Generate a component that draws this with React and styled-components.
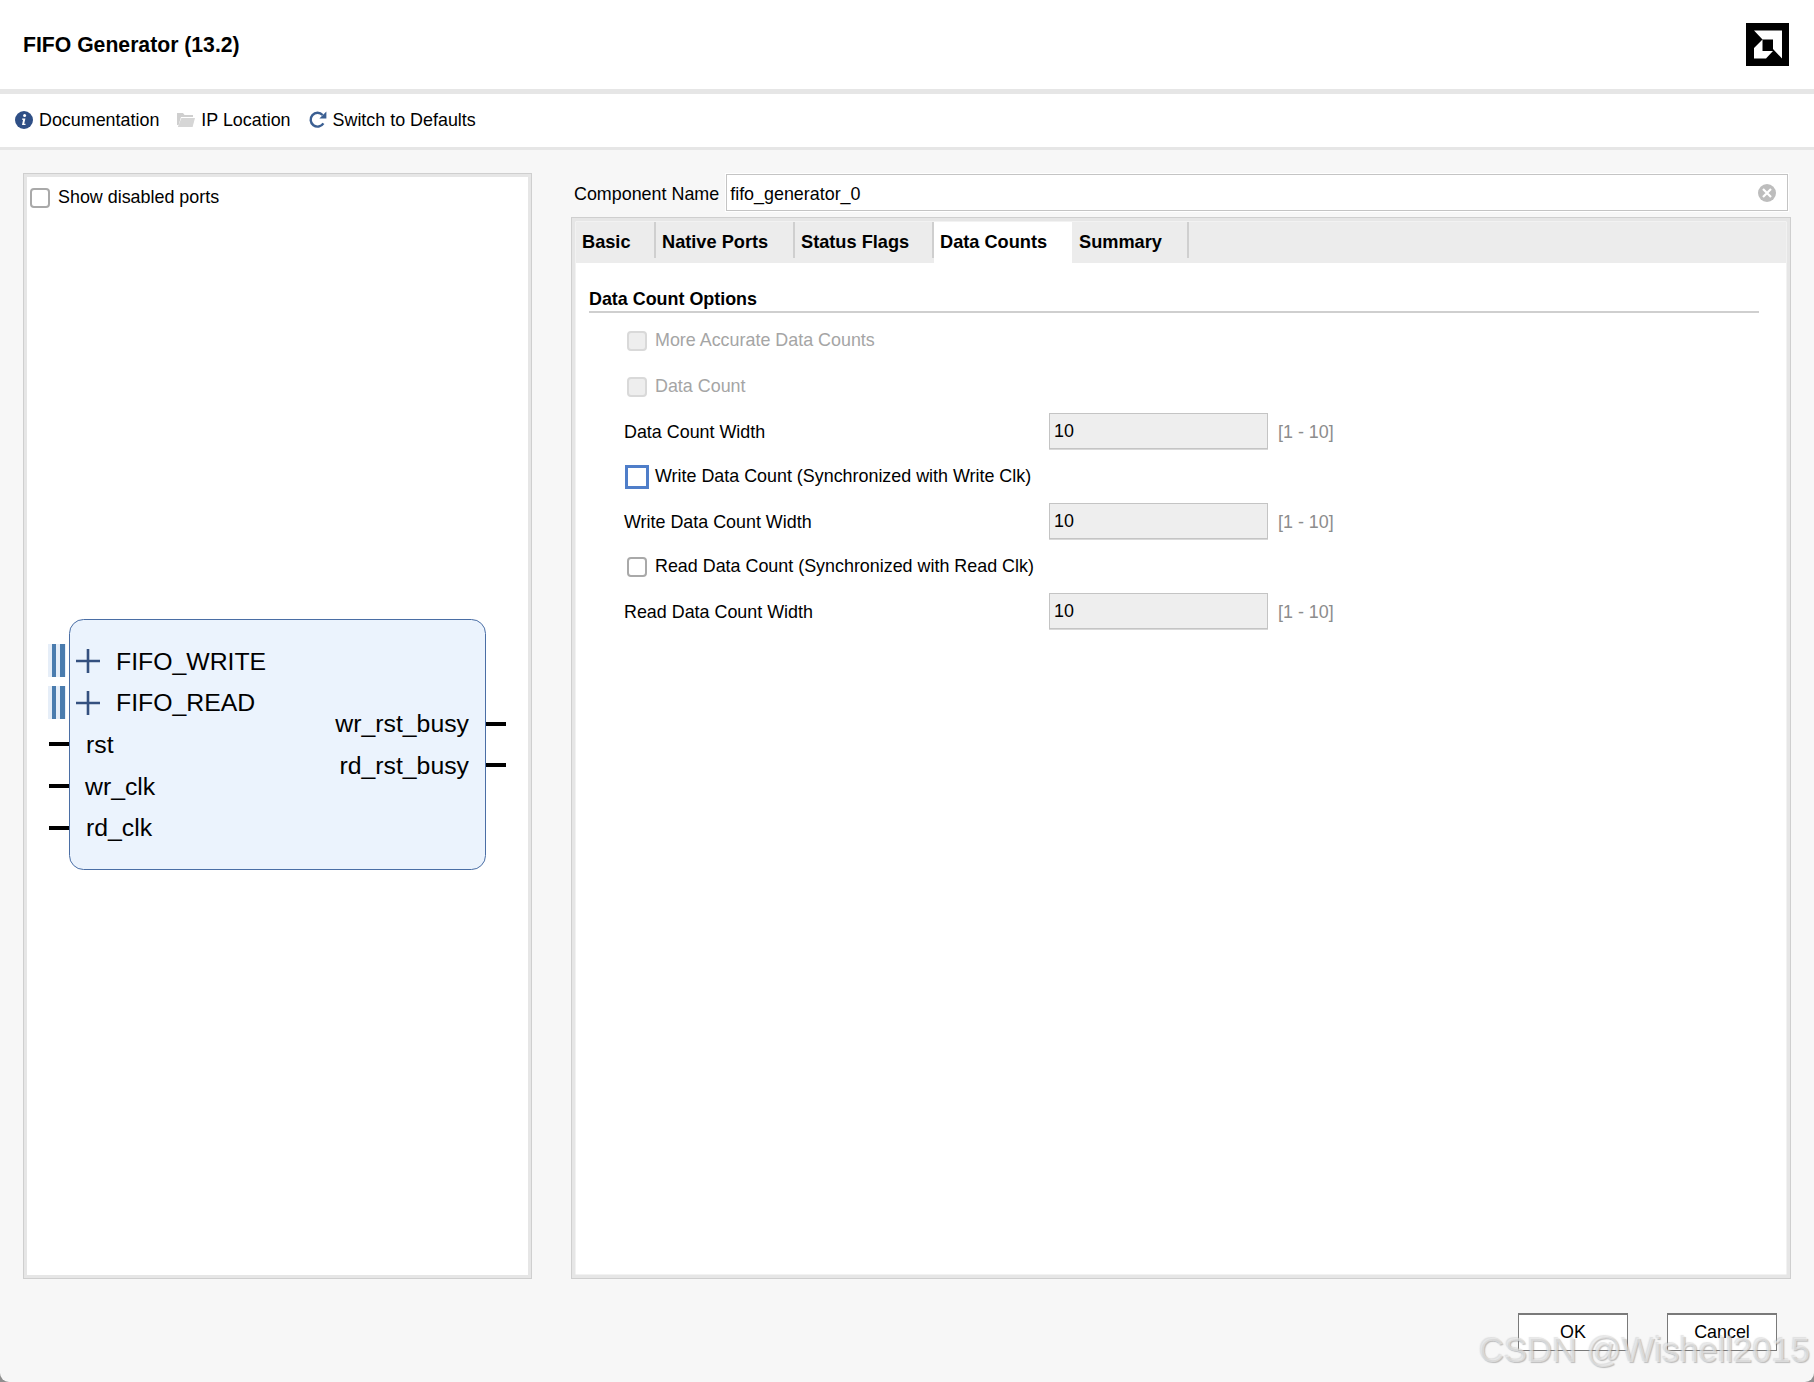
import React from 'react';
import styled, { createGlobalStyle } from 'styled-components';

const Global = createGlobalStyle`
  html, body { margin: 0; padding: 0; background: #8f8f8f; }
  body { font-family: "Liberation Sans", Arial, sans-serif; color: #000; }
  * { box-sizing: border-box; }
`;

const Page = styled.div`
  position: relative;
  width: 1814px;
  height: 1382px;
  display: flex;
  flex-direction: column;
  background: #f7f7f7;
  border-radius: 0 0 9px 9px;
  overflow: hidden;
`;

const Header = styled.header`
  height: 94px;
  flex: none;
  display: flex;
  align-items: center;
  justify-content: space-between;
  padding: 0 25px 0 23px;
  background: #fff;
  border-bottom: 5px solid #e6e6e6;
`;

const Title = styled.h1`
  margin: 0;
  font-size: 21.2px;
  font-weight: 700;
`;

const Toolbar = styled.nav`
  height: 56px;
  flex: none;
  display: flex;
  align-items: center;
  padding: 0 0 1px 15px;
  gap: 18px;
  background: #fff;
  border-bottom: 3px solid #e6e6e6;
`;

const ToolItem = styled.span`
  display: flex;
  align-items: center;
  gap: 6px;
  font-size: 17.9px;
`;

const Main = styled.main`
  flex: 1;
  display: flex;
  padding: 23px 23px 0;
  gap: 39px;
  height: 1130px;
`;

const SymbolPanel = styled.section`
  width: 509px;
  height: 1106px;
  flex: none;
  border: 1px solid #cfcfcf;
  background: #fff;
  box-shadow: inset 0 0 0 3px #e6e6e6;
  padding: 13px 0 0 6px;
`;

const Check = styled.span`
  display: block;
  flex: none;
  width: 20px;
  height: 20px;
  border-radius: 4px;
  border: 2px solid ${p => (p.$disabled ? '#d9d9d9' : '#a9a9a9')};
  background: ${p => (p.$disabled ? '#eeeeee' : '#fff')};
`;

const FocusCheck = styled.span`
  display: block;
  flex: none;
  width: 24px;
  height: 24px;
  margin-left: -2px;
  margin-right: -2px;
  border: 3px solid #4f7ec9;
  background: #fff;
`;

const CheckLabel = styled.label`
  display: flex;
  align-items: center;
  gap: 8px;
  font-size: 17.9px;
  color: ${p => (p.$disabled ? '#a5a5a5' : '#000')};
`;

const Diagram = styled.svg`
  display: block;
  margin: 410px 0 0 18px;
`;

const ConfigColumn = styled.section`
  flex: 1;
  display: flex;
  flex-direction: column;
  gap: 5px;
  min-width: 0;
`;

const NameRow = styled.div`
  height: 39px;
  display: flex;
  align-items: center;
  gap: 7px;
  padding: 0 3px 0 3px;
  font-size: 17.9px;
  white-space: nowrap;
`;

const NameText = styled.span`
  padding-top: 4px;
`;

const NameField = styled.div`
  flex: 1;
  height: 37px;
  display: flex;
  align-items: center;
  justify-content: space-between;
  padding: 0 11px 0 3px;
  background: #fff;
  border: 1px solid #c4c4c4;
  box-shadow: 0 0 0 1px #fff;
`;

const TabFrame = styled.div`
  width: 1220px;
  height: 1062px;
  display: flex;
  flex-direction: column;
  border: 1px solid #cfcfcf;
  background: #fff;
  box-shadow: inset 0 0 0 3.5px #e6e6e6;
  padding: 4px;
`;

const TabStrip = styled.div`
  height: 41px;
  flex: none;
  display: flex;
  background: #ececec;
`;

const Tab = styled.div`
  width: ${p => p.$w}px;
  height: 41px;
  padding: 10px 0 0 ${p => p.$left}px;
  display: flex;
  align-items: flex-start;
  font-size: 18.2px;
  font-weight: 700;
  background: ${p => (p.$active ? '#fff' : 'transparent')};
  border-right: ${p => (p.$active ? 'none' : '2px solid transparent')};
  position: relative;

  &::after {
    content: '';
    display: ${p => (p.$active ? 'none' : 'block')};
    position: absolute;
    right: -2px;
    top: 0;
    height: 36px;
    width: 2px;
    background: #cfcfcf;
  }
`;

const TabBody = styled.div`
  flex: 1;
  padding: 27px 27px 0 13px;
`;

const Section = styled.h2`
  margin: 0;
  height: 23px;
  font-size: 17.9px;
  font-weight: 700;
  line-height: 18px;
  border-bottom: 2px solid #cfcfcf;
`;

const Rows = styled.div`
  display: flex;
  flex-direction: column;
  padding: 3px 0 0 35px;
`;

const Row = styled.div`
  height: ${p => p.$h || 45}px;
  display: flex;
  align-items: center;
  padding-left: ${p => (p.$indent ? 3 : 0)}px;
  padding-top: ${p => (p.$indent ? 2 : 0)}px;
  font-size: 17.9px;
`;

const RowLabel = styled.span`
  width: 425px;
  flex: none;
  padding-top: 4px;
`;

const ValueBox = styled.span`
  width: 219px;
  height: 36px;
  flex: none;
  display: flex;
  align-items: center;
  padding: 2px 0 0 4px;
  background: #eeeeee;
  border: 1px solid #c4c4c4;
  box-shadow: 0 1px 0 #d8d8d8;
`;

const Range = styled.span`
  margin-left: 10px;
  padding-top: 4px;
  color: #8c8c8c;
`;

const Footer = styled.footer`
  display: flex;
  justify-content: flex-end;
  gap: 39px;
  padding: 0 37px 31px 0;
  flex: none;
`;

const Button = styled.button`
  width: 110px;
  height: 38px;
  padding: 0 0 1px;
  background: #fff;
  border: 1px solid #7a7a7a;
  border-top-width: 2px;
  font-family: inherit;
  font-size: 17.9px;
  color: #000;
`;

const Watermark = styled.div`
  position: absolute;
  right: 4px;
  bottom: 15px;
  font-size: 34.6px;
  line-height: 34px;
  color: rgba(240, 240, 240, 0.6);
  text-shadow: 1px 1px 1px rgba(130, 130, 130, 0.5), -1px -1px 1px rgba(170, 170, 170, 0.3);
  pointer-events: none;
`;

const InfoIcon = () => (
  <svg width="18" height="18" viewBox="0 0 18 18">
    <circle cx="9" cy="9" r="9" fill="#2f4f86" />
    <circle cx="9.6" cy="4.6" r="1.5" fill="#fff" />
    <path d="M7.2 7.6h3.2l-1.2 5.2h1.3v1.1H7l1.1-5.2H7z" fill="#fff" />
  </svg>
);

const FolderIcon = () => (
  <svg width="18" height="18" viewBox="0 0 18 18">
    <path d="M0 2h6l1.5 2H16v2H4L1.6 14H0z" fill="#cfcfcf" />
    <path d="M4.4 7H18l-2.4 9H0.8z" fill="#d6d6d6" />
  </svg>
);

const RefreshIcon = () => (
  <svg width="18" height="18" viewBox="0 0 18 18" fill="none">
    <path d="M14.4 12.4A6.9 6.9 0 1 1 13.6 4" stroke="#3b5f92" strokeWidth="2.4" />
    <path d="M17.4 0.6v7h-7z" fill="#3b5f92" />
  </svg>
);

const ClearIcon = () => (
  <svg width="18" height="18" viewBox="0 0 18 18">
    <circle cx="9" cy="9" r="9" fill="#bdbdbd" />
    <path d="M5 5l8 8M13 5l-8 8" stroke="#fff" strokeWidth="2.2" />
  </svg>
);

const AmdLogo = () => (
  <svg width="43" height="43" viewBox="0 0 43 43">
    <rect width="43" height="43" fill="#000" />
    <path d="M8 7.500h28v28l-9-9.500v-9.500h-10.500z" fill="#fff" />
    <path d="M8 35.500v-10.500l8.500-8.500V28H27l-7 7.500z" fill="#fff" />
  </svg>
);

const BusPin = ({ y }) => (
  <g>
    <rect x="0" y={y - 17} width="18" height="33" fill="#e6eef8" />
    <rect x="4" y={y - 17} width="4" height="33" fill="#4a7cae" />
    <rect x="12" y={y - 17} width="5" height="33" fill="#4a7cae" />
    <path d={`M28 ${y}h24M40 ${y - 12}v24`} stroke="#34507f" strokeWidth="2.600" fill="none" />
  </g>
);

const DiagramText = styled.text`
  font-family: "Liberation Sans", Arial, sans-serif;
  font-size: 24.8px;
  fill: #000;
`;

const FifoSymbol = () => (
  <Diagram width="460" height="256" viewBox="0 0 460 256">
    <rect x="21.500" y="1.500" width="416" height="250" rx="14" fill="#ebf3fd" stroke="#4a6ea5" strokeWidth="1" />
    <BusPin y={43} />
    <BusPin y={85} />
    <DiagramText x="68" y="52">FIFO_WRITE</DiagramText>
    <DiagramText x="68" y="93">FIFO_READ</DiagramText>
    {[126, 168, 210].map(y => <rect key={y} x="1" y={y - 2} width="20" height="4" fill="#000" />)}
    <DiagramText x="38" y="135">rst</DiagramText>
    <DiagramText x="37" y="177">wr_clk</DiagramText>
    <DiagramText x="38" y="218">rd_clk</DiagramText>
    <DiagramText x="421" y="114" textAnchor="end">wr_rst_busy</DiagramText>
    <DiagramText x="421" y="156" textAnchor="end">rd_rst_busy</DiagramText>
    {[106, 147].map(y => <rect key={y} x="438" y={y - 2} width="20" height="4" fill="#000" />)}
  </Diagram>
);

const widthRow = (label) => (
  <Row>
    <RowLabel>{label}</RowLabel>
    <ValueBox>10</ValueBox>
    <Range>[1 - 10]</Range>
  </Row>
);

export default function App() {
  return (
    <Page>
      <Global />
      <Header>
        <Title>FIFO Generator (13.2)</Title>
        <AmdLogo />
      </Header>
      <Toolbar>
        <ToolItem><InfoIcon />Documentation</ToolItem>
        <ToolItem><FolderIcon />IP Location</ToolItem>
        <ToolItem><RefreshIcon />Switch to Defaults</ToolItem>
      </Toolbar>
      <Main>
        <SymbolPanel>
          <CheckLabel><Check />Show disabled ports</CheckLabel>
          <FifoSymbol />
        </SymbolPanel>
        <ConfigColumn>
          <NameRow>
            <NameText>Component Name</NameText>
            <NameField><NameText>fifo_generator_0</NameText><ClearIcon /></NameField>
          </NameRow>
          <TabFrame>
            <TabStrip>
              <Tab $w={80} $left={6}>Basic</Tab>
              <Tab $w={139} $left={6}>Native Ports</Tab>
              <Tab $w={139} $left={6}>Status Flags</Tab>
              <Tab $w={138} $left={6} $active>Data Counts</Tab>
              <Tab $w={117} $left={7}>Summary</Tab>
            </TabStrip>
            <TabBody>
              <Section>Data Count Options</Section>
              <Rows>
                <Row $indent $h={47}><CheckLabel $disabled><Check $disabled />More Accurate Data Counts</CheckLabel></Row>
                <Row $indent><CheckLabel $disabled><Check $disabled />Data Count</CheckLabel></Row>
                {widthRow('Data Count Width')}
                <Row $indent><CheckLabel><FocusCheck />Write Data Count (Synchronized with Write Clk)</CheckLabel></Row>
                {widthRow('Write Data Count Width')}
                <Row $indent><CheckLabel><Check />Read Data Count (Synchronized with Read Clk)</CheckLabel></Row>
                {widthRow('Read Data Count Width')}
              </Rows>
            </TabBody>
          </TabFrame>
        </ConfigColumn>
      </Main>
      <Footer>
        <Button>OK</Button>
        <Button>Cancel</Button>
      </Footer>
      <Watermark>CSDN @Wishell2015</Watermark>
    </Page>
  );
}
